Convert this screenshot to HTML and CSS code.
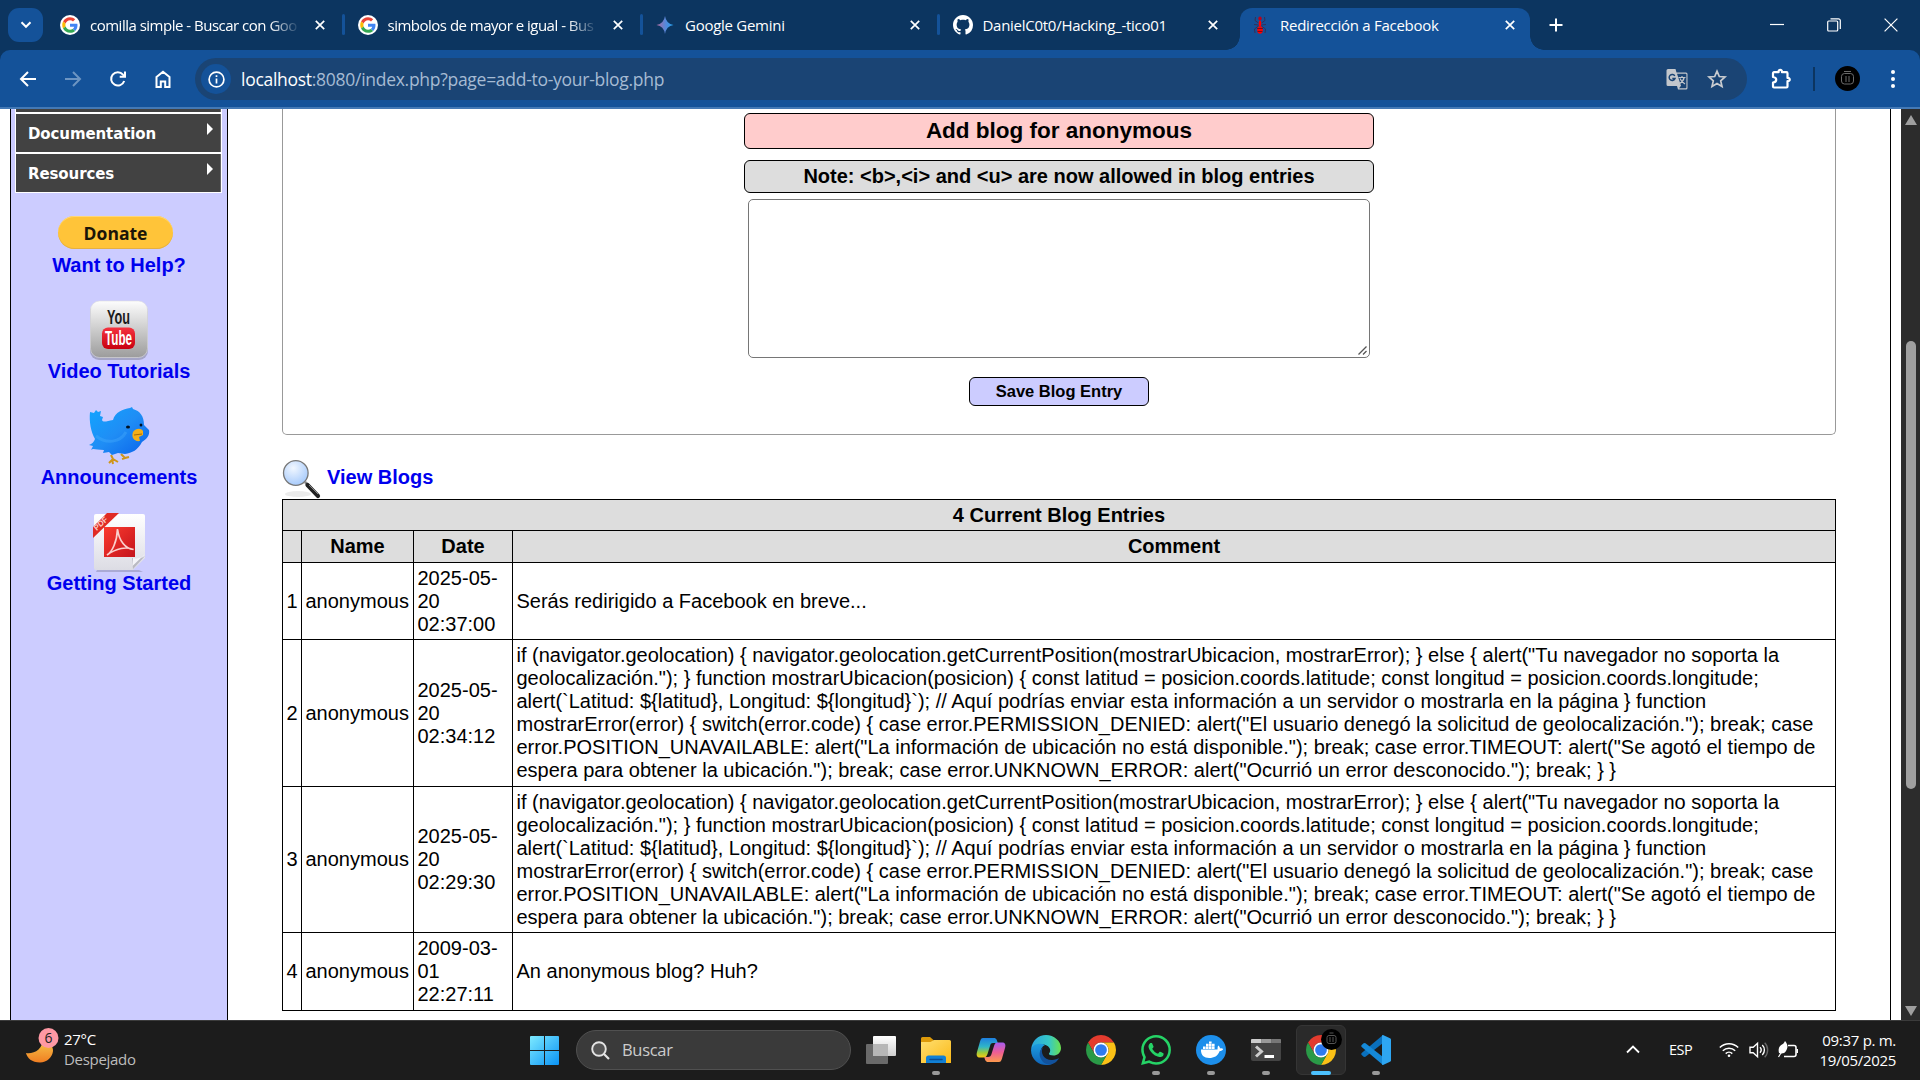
FILE: index.html
```
<!DOCTYPE html>
<html lang="es">
<head>
<meta charset="utf-8">
<title>Redirección a Facebook</title>
<link rel="stylesheet" href="styles.css">
</head>
<body>
<svg class="defs" width="0" height="0">
  <defs>
    <linearGradient id="gem" x1="0" y1="0" x2="1" y2="0"><stop offset="0" stop-color="#b06a9c"/><stop offset=".5" stop-color="#5b86d8"/><stop offset="1" stop-color="#1fa2f0"/></linearGradient>
    <linearGradient id="win" x1="0" y1="0" x2="1" y2="1"><stop offset="0" stop-color="#7deaff"/><stop offset="1" stop-color="#0a93f5"/></linearGradient>
    <linearGradient id="fold" x1="0" y1="0" x2="1" y2="1"><stop offset="0" stop-color="#ffdf70"/><stop offset="1" stop-color="#fbb917"/></linearGradient>
    <linearGradient id="moon" x1="0" y1="0" x2="0" y2="1"><stop offset="0" stop-color="#f7c64a"/><stop offset="1" stop-color="#f07e22"/></linearGradient>
    <linearGradient id="silver" x1="0" y1="0" x2="0" y2="1"><stop offset="0" stop-color="#fdfdfd"/><stop offset="1" stop-color="#9c9c9c"/></linearGradient>
    <linearGradient id="tube" x1="0" y1="0" x2="0" y2="1"><stop offset="0" stop-color="#f5333f"/><stop offset="1" stop-color="#c8000f"/></linearGradient>
    <linearGradient id="bird" x1="0" y1="0" x2="1" y2="1"><stop offset="0" stop-color="#12a5ff"/><stop offset=".5" stop-color="#1f8df5"/><stop offset="1" stop-color="#0a62ea"/></linearGradient>
    <linearGradient id="paper" x1="0" y1="0" x2="0" y2="1"><stop offset="0" stop-color="#fff"/><stop offset="1" stop-color="#dcdce4"/></linearGradient>
    <linearGradient id="pdf" x1="0" y1="0" x2="1" y2="1"><stop offset="0" stop-color="#fb3b2e"/><stop offset="1" stop-color="#c4131c"/></linearGradient>
    <radialGradient id="lens" cx=".4" cy=".3" r=".75"><stop offset="0" stop-color="#f1f7ff"/><stop offset="1" stop-color="#a3c8fb"/></radialGradient>
    <linearGradient id="copA" x1="0" y1="0" x2="0" y2="1"><stop offset="0" stop-color="#1e7fe0"/><stop offset=".45" stop-color="#2fb6c8"/><stop offset=".75" stop-color="#9ccb3b"/><stop offset="1" stop-color="#fbc814"/></linearGradient>
    <linearGradient id="copB" x1="0" y1="0" x2="0" y2="1"><stop offset="0" stop-color="#a65cf0"/><stop offset=".5" stop-color="#ee5d95"/><stop offset="1" stop-color="#fd9a4c"/></linearGradient>
    <linearGradient id="edgeA" x1="0" y1="0" x2="1" y2="0"><stop offset="0" stop-color="#2aa5e0"/><stop offset=".6" stop-color="#36c8c6"/><stop offset="1" stop-color="#6be24f"/></linearGradient>
    <linearGradient id="edgeB" x1="0" y1="0" x2="0" y2="1"><stop offset="0" stop-color="#1c9de0"/><stop offset="1" stop-color="#0f63b8"/></linearGradient>
    <linearGradient id="tv" x1="0" y1="0" x2="0" y2="1"><stop offset="0" stop-color="#fff"/><stop offset="1" stop-color="#cfcfcf"/></linearGradient>
    <symbol id="google" viewBox="0 0 48 48">
      <circle cx="24" cy="24" r="24" fill="#fff"/>
      <g transform="translate(5.3 5.3) scale(.78)">
      <path fill="#EA4335" d="M24 9.5c3.54 0 6.71 1.22 9.21 3.6l6.85-6.85C35.9 2.38 30.47 0 24 0 14.62 0 6.51 5.38 2.56 13.22l7.98 6.19C12.43 13.72 17.74 9.5 24 9.5z"/>
      <path fill="#4285F4" d="M46.98 24.55c0-1.57-.15-3.09-.38-4.55H24v9.02h12.94c-.58 2.96-2.26 5.48-4.78 7.18l7.73 6c4.51-4.18 7.09-10.36 7.09-17.65z"/>
      <path fill="#FBBC05" d="M10.53 28.59c-.48-1.45-.76-2.99-.76-4.59s.27-3.14.76-4.59l-7.98-6.19C.92 16.46 0 20.12 0 24c0 3.88.92 7.54 2.56 10.78l7.97-6.19z"/>
      <path fill="#34A853" d="M24 48c6.48 0 11.93-2.13 15.89-5.81l-7.73-6c-2.15 1.45-4.92 2.3-8.16 2.3-6.26 0-11.57-4.22-13.47-9.91l-7.98 6.19C6.51 42.62 14.62 48 24 48z"/>
      </g>
    </symbol>
    <symbol id="chrome" viewBox="2 2 44 44">
      <path fill="#e33b2e" d="M24 13H43.05A22 22 0 0 0 4.95 13L14.47 29.5A11 11 0 0 1 24 13z"/>
      <path fill="#fbc116" d="M24 13h19.05A22 22 0 0 1 24 46L33.53 29.5A11 11 0 0 0 24 13z"/>
      <path fill="#2a9a47" d="M4.95 13A22 22 0 0 0 24 46L33.53 29.5A11 11 0 0 1 14.47 29.5z"/>
      <circle cx="24" cy="24" r="11" fill="#fff"/><circle cx="24" cy="24" r="8.6" fill="#2f7bef"/>
    </symbol>
    <symbol id="x" viewBox="0 0 10 10"><path d="M.8.8l8.4 8.4M9.2.8L.8 9.2" fill="none" stroke="#fff" stroke-width="1.7"/></symbol>
  </defs>
</svg>

<header class="tabstrip">
  <div class="tab-search"><svg width="12" height="8" viewBox="0 0 12 8"><path d="M1.5 1.3L6 5.8l4.500-4.500" fill="none" stroke="#fff" stroke-width="2"/></svg></div>
  <div class="tab">
    <svg class="fav" viewBox="0 0 48 48"><use href="#google"/></svg>
    <span class="title fade">comilla simple - Buscar con Goo</span>
    <svg class="close"><use href="#x"/></svg>
  </div>
  <div class="tab">
    <svg class="fav" viewBox="0 0 48 48"><use href="#google"/></svg>
    <span class="title fade">simbolos de mayor e igual - Bus</span>
    <svg class="close"><use href="#x"/></svg>
  </div>
  <div class="tab">
    <svg class="fav" viewBox="0 0 20 20"><path fill="url(#gem)" d="M10 1q1.200 7.800 8.500 9Q11.200 11.200 10 19 8.800 11.200 1.500 10 8.800 8.800 10 1z"/></svg>
    <span class="title">Google Gemini</span>
    <svg class="close"><use href="#x"/></svg>
  </div>
  <div class="tab no-line">
    <svg class="fav" viewBox="0 0 16 16"><path fill="#fff" d="M8 0C3.58 0 0 3.58 0 8c0 3.54 2.29 6.53 5.47 7.59.4.07.55-.17.55-.38 0-.19-.01-.82-.01-1.49-2.01.37-2.53-.49-2.69-.94-.09-.23-.48-.94-.82-1.13-.28-.15-.68-.52-.01-.53.63-.01 1.08.58 1.23.82.72 1.21 1.87.87 2.33.66.07-.52.28-.87.51-1.07-1.78-.2-3.64-.89-3.64-3.95 0-.87.31-1.59.82-2.15-.08-.2-.36-1.02.08-2.12 0 0 .67-.21 2.2.82.64-.18 1.32-.27 2-.27.68 0 1.36.09 2 .27 1.53-1.04 2.2-.82 2.2-.82.44 1.1.16 1.92.08 2.12.51.56.82 1.27.82 2.15 0 3.07-1.87 3.75-3.65 3.95.29.25.54.73.54 1.48 0 1.07-.01 1.93-.01 2.2 0 .21.15.46.55.38A8.013 8.013 0 0016 8c0-4.42-3.58-8-8-8z"/></svg>
    <span class="title">DanielC0t0/Hacking_-tico01</span>
    <svg class="close"><use href="#x"/></svg>
  </div>
  <div class="tab active">
    <svg class="fav" viewBox="0 0 20 20"><path d="M8.500 8L5 5.500 5.500 2M11.500 8L15 5.500 14.500 2M8.500 10L4 9.500M11.500 10l4.500-.5M8.500 11L4.500 14l.5 4M11.500 11l4 3-.5 4" fill="none" stroke="#3a2a50" stroke-width=".9"/><ellipse cx="10" cy="3.500" rx="1.700" ry="2" fill="#c00018"/><ellipse cx="10" cy="8.500" rx="1.300" ry="3" fill="#f00"/><ellipse cx="10" cy="15" rx="2.800" ry="3.800" fill="#f00"/><path d="M7 13.500h6M7.500 16.500h5" stroke="#6b0d1c" stroke-width=".9"/></svg>
    <span class="title">Redirección a Facebook</span>
    <svg class="close"><use href="#x"/></svg>
  </div>
  <svg class="newtab" viewBox="0 0 14 14"><path d="M7 .5v13M.5 7h13" stroke="#fff" stroke-width="2"/></svg>
  <div class="winctl">
    <svg width="14" height="16"><path d="M0 7.500h14" stroke="#fff" stroke-width="1.200"/></svg>
    <svg width="14" height="14" viewBox="0 0 14 14" fill="none" stroke="#fff" stroke-width="1.200"><rect x=".7" y="3" width="10" height="10" rx="1"/><path d="M3.500.8h8a1.800 1.800 0 0 1 1.800 1.800V11"/></svg>
    <svg width="14" height="14" viewBox="0 0 14 14"><path d="M.6.6l12.800 12.800M13.400.6L.6 13.400" stroke="#fff" stroke-width="1.200"/></svg>
  </div>
</header>

<div class="toolbar-wrap">
<nav class="toolbar">
  <div class="navbtns">
    <svg viewBox="0 0 18 18" fill="none" stroke="#fff" stroke-width="2"><path d="M17 9H2.500M9 2L2 9l7 7"/></svg>
    <svg viewBox="0 0 18 18" fill="none" stroke="#6d95c2" stroke-width="2"><path d="M1 9h14.500M9 2l7 7-7 7"/></svg>
    <svg viewBox="0 0 18 18" fill="none" stroke="#fff" stroke-width="2"><path d="M15.200 11A6.700 6.700 0 1 1 14 4.600L16 6.600M16 1.500v5.300h-5.300"/></svg>
    <svg viewBox="0 0 18 18" fill="none" stroke="#fff" stroke-width="2"><path d="M2.500 7L9 1.800 15.500 7v10h-4.300v-5.500H6.800V17H2.500z"/></svg>
  </div>
  <div class="omnibox">
    <div class="info"><svg width="17" height="17" viewBox="0 0 17 17"><circle cx="8.500" cy="8.500" r="7.400" fill="none" stroke="#fff" stroke-width="1.700"/><path d="M8.500 7.500v5M8.500 4.300v1.800" stroke="#fff" stroke-width="1.700"/></svg></div>
    <span class="url"><b>localhost</b>:8080/index.php?page=add-to-your-blog.php</span>
    <svg class="translate" width="22" height="21" viewBox="0 0 22 21"><path fill="#c3c7cc" d="M2 0h7.500l1 3.500H20a1.500 1.500 0 0 1 1.500 1.500v14a1.500 1.500 0 0 1-1.500 1.500h-8L11 17H2a1.500 1.500 0 0 1-1.500-1.500v-14A1.500 1.500 0 0 1 2 0z"/><path fill="#1a4474" d="M11 4.800h8.700a.7.700 0 0 1 .7.700v13a.7.700 0 0 1-.7.700H13l2-2.400z"/><path d="M8.800 7A3 3 0 1 0 9 9.500H6.300" fill="none" stroke="#1a4474" stroke-width="1.500"/><path d="M12.500 8.500h7M16 7v1.500M18.200 8.500c-.7 3-2.700 5-4.700 6M14 9.500c1 2.500 2.700 4.200 5 5.500" fill="none" stroke="#c3c7cc" stroke-width="1.200"/></svg>
    <svg class="star" width="20" height="20" viewBox="0 0 20 20"><path d="M10 2.200l2.300 5.300 5.700.5-4.300 3.800 1.300 5.600-5-3-5 3 1.300-5.600L2 8l5.700-.5z" fill="none" stroke="#c9ccd0" stroke-width="1.700"/></svg>
  </div>
  <svg class="puzzle" width="21" height="22" viewBox="0 0 21 22"><path d="M2 5.200a1 1 0 0 1 1-1h4.600C7 1.200 11.500 1.200 11 4.200h4.500a1 1 0 0 1 1 1V10c3-.6 3 3.600 0 3.200v5.300a1 1 0 0 1-1 1H3a1 1 0 0 1-1-1v-4c4.300-.5 4.300-5 0-5.500z" fill="none" stroke="#fff" stroke-width="2.200" stroke-linejoin="round"/></svg>
  <i class="sep"></i>
  <svg class="profile" width="25" height="25" viewBox="0 0 25 25"><circle cx="12.500" cy="12.500" r="12.500" fill="#000"/><g fill="none" stroke="#777" stroke-width=".9"><rect x="6.500" y="7.500" width="12" height="10.500" rx="3"/><path d="M9 5.500h7M11 10v6M14 10v6"/></g></svg>
  <svg class="dots" width="6" height="22" viewBox="0 0 6 22" fill="#fff"><circle cx="3" cy="4" r="2"/><circle cx="3" cy="11" r="2"/><circle cx="3" cy="18" r="2"/></svg>
</nav>
</div>

<main class="viewport">
  <div class="page">
    <aside class="sidebar">
      <ul class="menu">
        <li class="cut"></li>
        <li><span>Documentation</span><i class="arrow"></i></li>
        <li><span>Resources</span><i class="arrow"></i></li>
      </ul>
      <div class="links">
        <a class="donate"><span class="donate-btn">Donate</span>Want to Help?</a>
        <a><svg width="60" height="60" viewBox="0 0 60 60"><rect x="1" y="3" width="58" height="57" rx="9" fill="#8888a0" opacity=".6"/><rect x="1.500" y="1" width="57" height="56.500" rx="9" fill="url(#silver)" stroke="#ddd" stroke-width=".6"/><rect x="13" y="27.500" width="33" height="21.500" rx="6" fill="url(#tube)"/><text x="29.500" y="24" class="yt" fill="#1b1b1b" textLength="23" lengthAdjust="spacingAndGlyphs">You</text><text x="29.500" y="45" class="yt" fill="#fff" textLength="27" lengthAdjust="spacingAndGlyphs">Tube</text></svg>Video Tutorials</a>
        <a><svg width="62" height="60" viewBox="0 0 62 60"><path d="M23 49l2 4-4 4M25 53l5 3M24 53l1 5M33 48l4 4-3 1M37 52l4-1" fill="none" stroke="#cf9519" stroke-width="2"/><path fill="url(#bird)" d="M2 6l4 1 2-3 2 2 3-1-1 5 3 1-1 3c1 3 5 1 11 0C27 6 35 3 42 2l2-1 1 2c7 2 11 7 11 16l5 5c1 5-2 9-7 12-4 8-10 11-17 12l-7-1-6 2-3-3-6 1 1-3C8 44 5 42 3 44l2-4-4-1c3-1 5-3 6-6C3 26 1 16 2 6z"/><path d="M8 30c10 8 24 7 30-4" fill="none" stroke="#54b5ff" stroke-width="3" opacity=".3"/><path d="M45 26c3-4 8-4 10-1v4l-4 2 1 4c-6 1-9-4-7-9z" fill="#f4ae17"/><path d="M46 29l8-1" stroke="#a66a08"/><ellipse cx="40" cy="21" rx="2" ry="1.600" fill="#012"/><ellipse cx="53" cy="19" rx="1.400" ry="1.600" fill="#012"/></svg>Announcements</a>
        <a><svg width="60" height="60" viewBox="0 0 60 60"><path d="M8 58h42l4 2H7z" fill="#88a" opacity=".5"/><path d="M7 2h47a2 2 0 0 1 2 2v42L44 58H7a2 2 0 0 1-2-2V4a2 2 0 0 1 2-2z" fill="url(#paper)"/><path d="M56 44L44 57l-1-11c4 1 9 1 13-2z" fill="#b9b9c2"/><path d="M56 42c-2 4-7 5-12 4l-.5 8z" fill="#f4f4f8"/><path fill="url(#pdf)" d="M15 15h31v30H15z"/><path d="M18 43c5-3 10-13 10.500-26 1.500 12 8 20 16 20.500-7-3-17-1.500-26.500 5.500z" fill="none" stroke="#fbd0cd" stroke-width="1.700"/><path d="M4 15L18 1h12L4 26z" fill="#e02b25"/><text class="pdf" transform="translate(13.500 13.500) rotate(-43)">PDF</text></svg>Getting Started</a>
      </div>
    </aside>
    <section class="content">
      <div class="fieldset">
        <div class="box pink">Add blog for anonymous</div>
        <div class="box note">Note: &lt;b&gt;,&lt;i&gt; and &lt;u&gt; are now allowed in blog entries</div>
        <div class="textarea"><svg width="9" height="9" viewBox="0 0 9 9"><path d="M.5 8.500l8-8M5 8.500L8.500 5" stroke="#555" stroke-width="1.300"/></svg></div>
        <div class="save">Save Blog Entry</div>
      </div>
      <div class="view">
        <svg width="40" height="41" viewBox="0 0 40 41"><ellipse cx="16" cy="35" rx="13" ry="3" fill="#999" opacity=".2"/><path d="M23 23l3 3" stroke="#888" stroke-width="2.500"/><path d="M25.500 26l10.500 11" stroke="#222" stroke-width="4.200" stroke-linecap="round"/><path d="M27 26l9 9" stroke="#888" stroke-width="1"/><circle cx="13.800" cy="14" r="12.300" fill="url(#lens)" stroke="#777" stroke-width="1.300"/></svg>
        <span>View Blogs</span>
      </div>
      <table>
        <colgroup><col class="c1"><col class="c2"><col class="c3"><col class="c4"></colgroup>
        <tr class="h1"><th colspan="4">4 Current Blog Entries</th></tr>
        <tr class="h2"><th></th><th>Name</th><th>Date</th><th>Comment</th></tr>
        <tr class="r3"><td>1</td><td>anonymous</td><td>2025-05-<br>20<br>02:37:00</td><td>Serás redirigido a Facebook en breve...</td></tr>
        <tr class="r6a"><td>2</td><td>anonymous</td><td>2025-05-<br>20<br>02:34:12</td><td>if (navigator.geolocation) { navigator.geolocation.getCurrentPosition(mostrarUbicacion, mostrarError); } else { alert("Tu navegador no soporta la<br>geolocalización."); } function mostrarUbicacion(posicion) { const latitud = posicion.coords.latitude; const longitud = posicion.coords.longitude;<br>alert(`Latitud: ${latitud}, Longitud: ${longitud}`); // Aquí podrías enviar esta información a un servidor o mostrarla en la página } function<br>mostrarError(error) { switch(error.code) { case error.PERMISSION_DENIED: alert("El usuario denegó la solicitud de geolocalización."); break; case<br>error.POSITION_UNAVAILABLE: alert("La información de ubicación no está disponible."); break; case error.TIMEOUT: alert("Se agotó el tiempo de<br>espera para obtener la ubicación."); break; case error.UNKNOWN_ERROR: alert("Ocurrió un error desconocido."); break; } }</td></tr>
        <tr class="r6b"><td>3</td><td>anonymous</td><td>2025-05-<br>20<br>02:29:30</td><td>if (navigator.geolocation) { navigator.geolocation.getCurrentPosition(mostrarUbicacion, mostrarError); } else { alert("Tu navegador no soporta la<br>geolocalización."); } function mostrarUbicacion(posicion) { const latitud = posicion.coords.latitude; const longitud = posicion.coords.longitude;<br>alert(`Latitud: ${latitud}, Longitud: ${longitud}`); // Aquí podrías enviar esta información a un servidor o mostrarla en la página } function<br>mostrarError(error) { switch(error.code) { case error.PERMISSION_DENIED: alert("El usuario denegó la solicitud de geolocalización."); break; case<br>error.POSITION_UNAVAILABLE: alert("La información de ubicación no está disponible."); break; case error.TIMEOUT: alert("Se agotó el tiempo de<br>espera para obtener la ubicación."); break; case error.UNKNOWN_ERROR: alert("Ocurrió un error desconocido."); break; } }</td></tr>
        <tr class="r4"><td>4</td><td>anonymous</td><td>2009-03-<br>01<br>22:27:11</td><td>An anonymous blog? Huh?</td></tr>
      </table>
    </section>
  </div>
  <div class="scrollbar"><i class="up"></i><i class="thumb"></i><i class="down"></i></div>
</main>

<footer class="taskbar">
  <div class="weather">
    <svg width="34" height="38" viewBox="0 0 34 38"><path d="M1 26c4 .6 9-.3 12.500-3.500 3-3 4-6 4-9C24 15 28.500 19 28 24c-.5 6-6 11.500-13 11.500C7 35.500 2 31 1 26z" fill="url(#moon)"/><circle cx="23.500" cy="11" r="10" fill="#ff99a4"/><text x="23.500" y="16" class="badge">6</text></svg>
    <div class="wtext"><div>27°C</div><div class="dim">Despejado</div></div>
  </div>
  <div class="apps">
    <svg class="start" width="29" height="29" viewBox="0 0 29 29"><path fill="url(#win)" d="M1 0h13v14H0V1a1 1 0 0 1 1-1zM15 0h13a1 1 0 0 1 1 1v13H15zM0 15h14v14H1a1 1 0 0 1-1-1zM15 15h14v13a1 1 0 0 1-1 1H15z"/></svg>
    <div class="search"><svg width="19" height="19" viewBox="0 0 19 19"><circle cx="8" cy="8" r="6.800" fill="#555" stroke="#e4e4e4" stroke-width="1.900"/><path d="M13 13l5 5" stroke="#e4e4e4" stroke-width="2.200"/></svg><span>Buscar</span></div>
    <div class="app first"><svg width="30" height="30" viewBox="0 0 30 30"><rect x="0" y="9" width="22" height="20" rx="1" fill="#6a6a6a"/><rect x="7" y="1" width="23" height="20" rx="1" fill="url(#tv)"/><path d="M7 9h15v12H7z" fill="#b7b7b7"/></svg></div>
    <div class="app run"><svg width="30" height="30" viewBox="0 0 30 30"><path d="M0 3.500A1.500 1.500 0 0 1 1.500 2H9l4 3.500L9 9H0z" fill="#dd9a0a"/><path d="M0 7h9.500L13 5h15.500A1.500 1.500 0 0 1 30 6.500V28H0z" fill="url(#fold)"/><path d="M5 28v-5a2.500 2.500 0 0 1 2.500-2.500h15A2.500 2.500 0 0 1 25 23v5z" fill="#1180d6"/><path d="M9 24.500h12" stroke="#0b4c94" stroke-width="1.500" stroke-linecap="round"/></svg></div>
    <div class="app"><svg width="30" height="30" viewBox="0 0 30 30"><path d="M7 3h11c2.500 0 3 2.500 3.800 5H17c-2 0-2.500 1-3 3l-2.500 8c-.8 2.500-2 3.500-4 3.500H4c-3 0-4-2-3-5.500L4 6.500C4.700 4 5.500 3 7 3z" fill="url(#copA)"/><path d="M23 27H12c-2.500 0-3-2.500-3.800-5H12c2 0 3-1 3.500-3L18 11c.8-2.500 1.500-3.500 4-3.500h4c3 0 4 2 3 5.500l-3 10.500c-.7 2.500-1.500 3.500-3 3.500z" fill="url(#copB)"/></svg></div>
    <div class="app"><svg width="30" height="30" viewBox="0 0 30 30"><path d="M.2 14C1 6 7 0 15 0s15 6 15 13c0 5-4 7.500-7.500 7.500-3 0-5-1-4.500-2 1.500-1.500 1.500-4 .5-5.500C15 8 6 8 .2 14z" fill="url(#edgeA)"/><path d="M0 15C1 9 9 7.500 14 10c-6 2-6 13 1 17 4 2 7 1.500 7 1.500C14 33 0 28 0 15z" fill="url(#edgeB)"/><path d="M12 12c-3 5 0 13 9 13 3 0 5.500-1.200 7-2-1.500 3-5 6.500-10 6.500C10 29 5 18 12 12z" fill="#12529c"/></svg></div>
    <div class="app"><svg width="30" height="30" viewBox="0 0 30 30"><use href="#chrome"/></svg></div>
    <div class="app run"><svg width="30" height="30" viewBox="0 0 24 24"><path fill="#25d366" d="M17.472 14.382c-.297-.149-1.758-.867-2.03-.967-.273-.099-.471-.148-.67.15-.197.297-.767.966-.94 1.164-.173.199-.347.223-.644.075-.297-.15-1.255-.463-2.39-1.475-.883-.788-1.48-1.761-1.653-2.059-.173-.297-.018-.458.13-.606.134-.133.298-.347.446-.52.149-.174.198-.298.298-.497.099-.198.05-.371-.025-.52-.075-.149-.669-1.612-.916-2.207-.242-.579-.487-.5-.669-.51-.173-.008-.371-.01-.57-.01-.198 0-.52.074-.792.372-.272.297-1.040 1.016-1.040 2.479 0 1.462 1.065 2.875 1.213 3.074.149.198 2.096 3.200 5.077 4.487.709.306 1.262.489 1.694.625.712.227 1.360.195 1.871.118.571-.085 1.758-.719 2.006-1.413.248-.694.248-1.289.173-1.413-.074-.124-.272-.198-.57-.347zm-5.421 7.403h-.004a9.870 9.870 0 0 1-5.031-1.378l-.361-.214-3.741.982.998-3.648-.235-.374a9.860 9.860 0 0 1-1.510-5.260c.001-5.450 4.436-9.884 9.888-9.884 2.640 0 5.122 1.030 6.988 2.898a9.825 9.825 0 0 1 2.893 6.994c-.003 5.450-4.437 9.884-9.885 9.884m8.413-18.297A11.815 11.815 0 0 0 12.050 0C5.495 0 .16 5.335.157 11.892c0 2.096.547 4.142 1.588 5.945L.057 24l6.305-1.654a11.882 11.882 0 0 0 5.683 1.448h.005c6.554 0 11.890-5.335 11.893-11.893a11.821 11.821 0 0 0-3.480-8.413z"/></svg></div>
    <div class="app run"><svg width="30" height="30" viewBox="0 0 30 30"><circle cx="15" cy="15" r="15" fill="#1d8feb"/><path fill="#fff" d="M5 14.500h16.500c.3-1.300-.2-2.700.8-4 1.200 1 1.700 2 1.700 3 1-.3 2.300-.2 3.200.4-.6 1.500-2 2-3.500 2-2 5-5.500 7-10.500 7-5 0-8.500-2.500-8.200-8.400z"/><path fill="#fff" d="M7 11.500h2.600V14H7zM10 11.500h2.600V14H10zM13 11.500h2.600V14H13zM16 11.500h2.600V14H16zM10 8.800h2.600v2.400H10zM13 8.800h2.600v2.400H13zM16 8.800h2.600v2.400H16zM13 6.500h2.600v2H13z"/></svg></div>
    <div class="app run"><svg width="30" height="30" viewBox="0 0 30 30"><path d="M0 4.500h30V24a2 2 0 0 1-2 2H2a2 2 0 0 1-2-2z" fill="#444"/><path d="M0 8V5a1 1 0 0 1 1-1h9.500v4z" fill="#ccc"/><path d="M10.500 4h10v4h-10z" fill="#999"/><path d="M20.500 4H29a1 1 0 0 1 1 1v3h-9.500z" fill="#777"/><path d="M5 11.500l5.500 5L5 21.500" fill="none" stroke="#ccc" stroke-width="3"/><path d="M13.500 21.500h9.500" stroke="#fff" stroke-width="3"/></svg></div>
    <div class="app run current"><svg width="36" height="36" viewBox="0 0 36 36"><use href="#chrome" x="0" y="6" width="30" height="30"/><circle cx="25.500" cy="10.500" r="10.500" fill="#000"/><g fill="none" stroke="#555" stroke-width="1"><rect x="21" y="6.500" width="9" height="8" rx="2"/><path d="M23.500 4h4M24 8v5M27 8v5"/></g></svg></div>
    <div class="app run"><svg width="30" height="30" viewBox="0 0 30 30"><path d="M22 0v8L4.500 21.800 3 22l-2.600-2.300v-1.500z" fill="#0a70bd"/><path d="M22 30v-8L4.500 8.200 3 8 .4 10.300v1.500z" fill="#1589d8"/><path d="M22 0l7 3.200a1.500 1.500 0 0 1 1 1.300v21a1.500 1.500 0 0 1-1 1.300L22 30c-.6 0-1-.6-1-1V1c0-.5.4-1 1-1z" fill="#2ea6f2"/></svg></div>
  </div>
  <div class="tray">
    <svg class="caret" width="14" height="9" viewBox="0 0 14 9"><path d="M1 7.500l6-6 6 6" fill="none" stroke="#fff" stroke-width="1.800"/></svg>
    <span class="lang">ESP</span>
    <svg class="wifi" width="20" height="16" viewBox="0 0 20 16" fill="none" stroke="#fff" stroke-width="1.500"><path d="M.8 5.500a13 13 0 0 1 18.400 0M3.800 8.700a8.800 8.800 0 0 1 12.400 0M6.700 11.600a4.700 4.700 0 0 1 6.600 0"/><circle cx="10" cy="13.700" r="1.300" fill="#fff" stroke="none"/></svg>
    <svg class="vol" width="20" height="18" viewBox="0 0 20 18" fill="none" stroke="#fff" stroke-width="1.400"><path d="M1 6.300h3.200L8.500 2.300v13.400l-4.300-4H1z"/><path d="M11 6.300a4 4 0 0 1 0 5.400M13.300 4a7 7 0 0 1 0 10"/><path d="M15.700 1.800a10.300 10.300 0 0 1 0 14.400" stroke="#666"/></svg>
    <svg class="bat" width="21" height="18" viewBox="0 0 21 18"><path d="M10 4.500h6a2 2 0 0 1 2 2v7a2 2 0 0 1-2 2H6" fill="none" stroke="#fff" stroke-width="1.600"/><path d="M18.500 8h1.500v4h-1.500z" fill="#fff"/><path d="M7 0c2.500 3 3.500 6 1 10C7 12.500 3 13 1 12-.5 6 3 4 5 3 6 2 6.500 1 7 0z" fill="#fff"/><path d="M6 7l-5.500 9" stroke="#fff" stroke-width="1.200"/></svg>
    <div class="clock"><div>09:37 p. m.</div><div>19/05/2025</div></div>
  </div>
</footer>
</body>
</html>
```
FILE: styles.css
```
* { box-sizing: border-box; }
body { margin: 0; width: 1920px; height: 1080px; overflow: hidden; display: flex; flex-direction: column; background: #fff; color: #000; font-family: "Liberation Sans", Arial, sans-serif; font-size: 20px; line-height: 23px; }
svg { display: block; flex: none; overflow: visible; }
i { font-style: normal; }
.defs { position: absolute; }

/* Tab strip */
.tabstrip { height: 50px; flex: none; background: #0c3560; display: flex; align-items: center; padding-left: 8px; font: 15px/20px "Open Sans", "Noto Sans", sans-serif; color: #fff; }
.tab-search { width: 35px; height: 34px; border-radius: 11px; background: #145299; display: flex; align-items: center; justify-content: center; margin-right: 3.5px; }
.tab { position: relative; isolation: isolate; width: 297.5px; height: 50px; flex: none; display: flex; align-items: center; padding: 0 0 0 13.5px; }
.tab:not(.no-line):not(.active)::after { content: ""; position: absolute; right: -1px; top: 14px; width: 3px; height: 21px; background: #145299; border-radius: 2px; }
.fav { width: 20px; height: 20px; margin-right: 10px; }
.title { width: 210px; white-space: nowrap; letter-spacing: -0.27px; }
.fade { letter-spacing: -0.5px; -webkit-mask-image: linear-gradient(to right, #000 180px, transparent 210px); mask-image: linear-gradient(to right, #000 180px, transparent 210px); }
.close { width: 10px; height: 10px; margin-left: 15px; }
.active::before { content: ""; position: absolute; z-index: -1; left: 3.5px; right: 4px; top: 8px; bottom: 0; background: #145299; border-radius: 12px 12px 0 0; }
.active::after { content: ""; position: absolute; z-index: -1; left: -10.5px; right: -10px; bottom: 0; height: 14px; background: radial-gradient(circle at 0 0, transparent 13.5px, #145299 14px) left / 14px 14px no-repeat, radial-gradient(circle at 100% 0, transparent 13.5px, #145299 14px) right / 14px 14px no-repeat; }
.newtab { width: 14px; height: 14px; margin-left: 15px; }
.winctl { margin-left: auto; display: flex; align-items: center; gap: 43px; margin-right: 22px; }

/* Address bar */
.toolbar-wrap { height: 59px; flex: none; background: #0c3560; }
.toolbar { height: 59px; border-radius: 10px 10px 0 0; background: #145299; border-bottom: 2px solid #4479b5; display: flex; align-items: center; }
.navbtns { display: flex; gap: 27px; margin-left: 18.5px; width: 176.500px; }
.navbtns svg { width: 18px; height: 18px; }
.omnibox { width: 1552px; height: 42px; border-radius: 21px; background: #1a4474; display: flex; align-items: center; padding-left: 6px; margin-top: 1px; }
.info { width: 30px; height: 30px; border-radius: 50%; background: #145299; display: flex; align-items: center; justify-content: center; margin-right: 10px; }
.url { font: 17.5px/24px "Open Sans", "Noto Sans", sans-serif; letter-spacing: -0.28px; color: #a6bbd3; white-space: nowrap; flex: 1; }
.url b { font-weight: 400; color: #fff; }
.star { margin: 0 20px 0 19px; }
.puzzle { margin-left: 24px; }
.sep { width: 2px; height: 24px; margin-left: 21px; background: #0c3560; }
.profile { margin-left: 20px; }
.dots { margin-left: 30px; }

/* Document */
.viewport { height: 911px; flex: none; display: flex; overflow: hidden; }
.page { width: 1881px; margin-left: 10px; border: solid #000; border-width: 0 1px; display: flex; }
.sidebar { width: 217px; flex: none; background: #ccf; border-right: 1px solid #000; display: flex; flex-direction: column; align-items: center; }
.menu { list-style: none; margin: 0 5px 0 4px; padding: 0 1px 1px; background: #fff; align-self: stretch; font: bold 15px/20px "DejaVu Sans", Verdana, sans-serif; color: #fff; display: flex; flex-direction: column; gap: 2px; }
.menu li { height: 38px; background: #424242; border-right: 1px solid #666; display: flex; justify-content: space-between; padding: 10px 7px 0 12px; letter-spacing: -0.1px; }
.menu .cut { height: 3px; padding: 0; }
.arrow { width: 0; height: 0; margin-top: -1px; border: 6px solid transparent; border-left-color: #fff; border-right: 0; }
.links { display: flex; flex-direction: column; align-items: center; color: #00e; font-weight: bold; padding-top: 23px; }
.links a { display: flex; flex-direction: column; align-items: center; height: 106px; white-space: nowrap; }
.links .donate { height: 84px; }
.donate-btn { width: 115px; height: 33px; border-radius: 17px; background: #ffc439; box-shadow: inset 0 1px 0 #ffd778, inset 0 -1px 0 #e5b040; color: #1b1508; font: 700 17.5px/35px "Open Sans", sans-serif; text-align: center; margin: 0 7px 5px 0; }
.yt { font: bold 21px "Liberation Sans Narrow", "Liberation Sans", sans-serif; text-anchor: middle; }
.pdf { font: bold 8px "Liberation Sans", sans-serif; fill: #fbc9c4; text-anchor: middle; }
.content { width: 1554px; margin-left: 54px; flex: none; }
.fieldset { height: 326px; border: 1px solid #999; border-top: 0; border-radius: 0 0 5px 5px; display: flex; flex-direction: column; align-items: center; padding-top: 4px; font-weight: bold; }
.box { width: 630px; border: 1px solid #000; border-radius: 6px; text-align: center; }
.pink { height: 36px; background: #fcc; font-size: 22.5px; line-height: 34px; }
.note { height: 33px; margin-top: 11px; background: #ddd; line-height: 31px; }
.textarea { width: 622px; height: 159px; margin-top: 6px; border: 1px solid #767676; border-radius: 5px; display: flex; align-items: flex-end; justify-content: flex-end; padding: 2px; }
.save { width: 180px; height: 29px; margin-top: 19px; border: 1px solid #000; border-radius: 6px; background: #ccf; text-align: center; font-size: 16.5px; line-height: 26px; }
.view { height: 64px; display: flex; align-items: flex-start; padding-top: 24px; color: #00e; font-weight: bold; }
.view span { margin: 7px 0 0 5px; }
table { width: 1554px; table-layout: fixed; border-collapse: collapse; }
.c1 { width: 19px; } .c2 { width: 112px; } .c3 { width: 99px; }
th, td { border: 1px solid #000; padding: 0 0 0 3.5px; text-align: left; white-space: nowrap; }
th { background: #ddd; text-align: center; padding: 0; }
.h1 { height: 31px; } .h2 { height: 32px; } .r3 { height: 77px; } .r6a { height: 147px; } .r6b { height: 146px; } .r4 { height: 78px; }
.scrollbar { width: 19px; margin-left: auto; background: #2c2c2c; display: flex; flex-direction: column; align-items: center; }
.up, .down { width: 0; height: 0; border: 6px solid transparent; }
.up { border-bottom: 10px solid #9f9f9f; border-top: 0; margin-top: 6px; }
.thumb { width: 10px; height: 448px; border-radius: 5px; background: #9f9f9f; margin-top: 216px; }
.down { border-top: 10px solid #9f9f9f; border-bottom: 0; margin-top: auto; margin-bottom: 4px; }

/* Taskbar */
.taskbar { height: 60px; flex: none; background: #1c1c1c; border-top: 1px solid #3b3b3b; display: flex; color: #fff; font: 15px/20px "Open Sans", "Noto Sans", sans-serif; }
.weather { width: 530px; display: flex; padding: 6px 0 0 25px; }
.wtext { margin: 2px 0 0 5px; letter-spacing: -0.3px; }
.dim { color: #bdbdbd; }
.badge { font: 14px "Open Sans", sans-serif; text-anchor: middle; fill: #222; }
.apps { display: flex; align-items: center; padding-bottom: 1px; }
.search { width: 275px; height: 40px; margin-left: 17px; border-radius: 20px; background: #3a3a3a; border: 1px solid #505050; display: flex; align-items: center; padding-left: 14px; gap: 12px; font-size: 16.5px; color: #ccc; letter-spacing: -0.3px; }
.app { position: relative; width: 50px; height: 50px; margin-right: 5px; display: flex; align-items: center; justify-content: center; }
.first { margin-left: 5px; }
.run::after { content: ""; position: absolute; left: 21px; bottom: 0; width: 8px; height: 4px; border-radius: 2px; background: #999; }
.current { background: #2a2a2a; border: 1px solid #353535; border-radius: 6px; }
.current svg { margin: -6px 0 0 6px; }
.current::after { width: 20px; left: 14px; bottom: -1px; background: #4cc2ff; }
.tray { margin-left: auto; display: flex; align-items: center; padding: 0 24px 2px 0; }
.lang { margin-left: 29px; width: 25px; font-size: 14.5px; letter-spacing: -0.5px; }
.wifi { margin-left: 25px; }
.vol { margin-left: 10px; }
.bat { margin-left: 9px; }
.clock { width: 97px; text-align: right; letter-spacing: -0.3px; white-space: nowrap; }
```
